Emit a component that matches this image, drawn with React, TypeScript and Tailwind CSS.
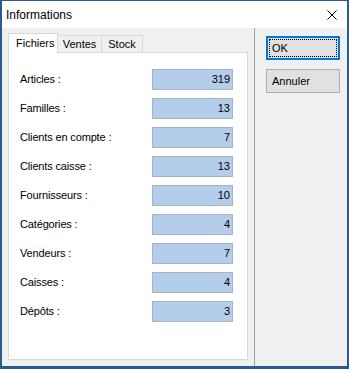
import React from "react";

const rows: [string, string][] = [
  ["Articles :", "319"],
  ["Familles :", "13"],
  ["Clients en compte :", "7"],
  ["Clients caisse :", "13"],
  ["Fournisseurs :", "10"],
  ["Catégories :", "4"],
  ["Vendeurs :", "7"],
  ["Caisses :", "4"],
  ["Dépôts :", "3"],
];

export default function App() {
  return (
    <div
      className="w-[349px] h-[369px] bg-[#2a5b8c] pt-px pl-[2px] pr-[2px] pb-[3px] flex flex-col"
      style={{ fontFamily: '"Liberation Sans", Arial, sans-serif' }}
    >
      {/* Title bar */}
      <div className="h-[27px] bg-white flex items-center justify-between pl-[4px] pr-[10px] shrink-0">
        <span className="text-[12px] text-black leading-none">Informations</span>
        <svg width="10" height="10" viewBox="0 0 10 10" className="block">
          <path d="M0.5 0.5 L9.5 9.5 M9.5 0.5 L0.5 9.5" stroke="#000" strokeWidth="1" fill="none" />
        </svg>
      </div>

      {/* Body */}
      <div className="flex-1 bg-[#f0f0f0] flex flex-row">
        {/* Left: tabs */}
        <div className="w-[252px] pt-[5px] pl-[6px]">
          <div className="flex items-end h-[19px]">
            <div className="relative z-10 -mb-px h-[20px] w-[50px] bg-white border-l border-t border-r border-[#d9d9d9] flex items-center pl-[7px] text-[11px] text-black">
              Fichiers
            </div>
            <div className="h-[17px] w-[44px] bg-[#f0f0f0] border-t border-r border-[#d9d9d9] flex items-center justify-center text-[11px] text-black">
              Ventes
            </div>
            <div className="h-[17px] w-[41px] bg-[#f0f0f0] border-t border-r border-[#d9d9d9] flex items-center justify-center text-[11px] text-black">
              Stock
            </div>
          </div>
          <div className="w-[240px] h-[308px] bg-white border border-[#d9d9d9] pt-[16px] pl-[11px] flex flex-col gap-[8px]">
            {rows.map(([label, value]) => (
              <div key={label} className="flex items-center h-[21px]">
                <div className="w-[132px] text-[11px] text-black tracking-[-0.15px] leading-none">{label}</div>
                <div className="w-[81px] h-[21px] bg-[#b4cdeb] border border-[#a7b3c2] flex items-center justify-end pr-[2px] text-[11px] text-black leading-none">
                  {value}
                </div>
              </div>
            ))}
          </div>
        </div>

        {/* Separator */}
        <div className="w-px bg-[#a0a0a0]" />

        {/* Right: buttons */}
        <div className="flex-1 pt-[8px] pl-[11px] flex flex-col gap-[9px]">
          <div className="relative w-[74px] h-[24px] bg-[#e1e1e1] border-2 border-[#0078d7] flex items-center pl-[4px] text-[11px] text-black">
            <span className="absolute inset-[1px] border border-dotted border-black" />
            OK
          </div>
          <div className="w-[74px] h-[24px] bg-[#e1e1e1] border border-[#adadad] flex items-center pl-[5px] text-[11px] text-black">
            Annuler
          </div>
        </div>
      </div>
    </div>
  );
}
